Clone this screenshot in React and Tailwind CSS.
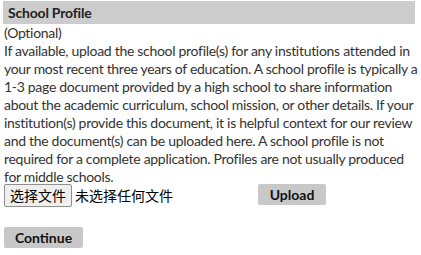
export default function App() {
  const lines = [
    "If available, upload the school profile(s) for any institutions attended in",
    "your most recent three years of education. A school profile is typically a",
    "1-3 page document provided by a high school to share information",
    "about the academic curriculum, school mission, or other details. If your",
    "institution(s) provide this document, it is helpful context for our review",
    "and the document(s) can be uploaded here. A school profile is not",
    "required for a complete application. Profiles are not usually produced",
    "for middle schools.",
  ];
  return (
    <div className="w-[421px] h-[255px] bg-white text-[#333] overflow-hidden" style={{ fontFamily: "Lato, 'Noto Sans CJK SC', sans-serif" }}>
      <div className="pt-[1px] px-[3px]">
        <div className="w-[412px] h-[23px] bg-[#cccccc] flex items-center pl-[5px] text-[14px] font-bold text-[#222] tracking-[-0.2px]">
          School Profile
        </div>
      </div>
      <div className="px-[4px] text-[14px] leading-[18px] tracking-[-0.3px]">
        <div>(Optional)</div>
        {lines.map((l, i) => (
          <div key={i} className="whitespace-nowrap">{l}</div>
        ))}
      </div>
      <div className="flex items-center px-[4px] mt-[-2px] h-[23px]">
        <div className="h-[23px] w-[68px] border border-[#8f8f8f] rounded-[2px] bg-[#efefef] flex items-center justify-center text-[14px] text-black" style={{ fontFamily: "'Noto Sans CJK SC', sans-serif" }}>
          选择文件
        </div>
        <span className="ml-[3px] text-[14px] text-black" style={{ fontFamily: "'Noto Sans CJK SC', sans-serif" }}>未选择任何文件</span>
        <div className="ml-auto mr-[91px] self-start h-[21px] w-[68px] bg-[#c8c8c8] rounded-[2px] flex items-center justify-center text-[14px] font-bold text-[#111]">
          Upload
        </div>
      </div>
      <div className="px-[4px] mt-[20px]">
        <div className="h-[21px] w-[79px] bg-[#c8c8c8] rounded-[2px] flex items-center justify-center text-[14px] font-bold text-[#111]">
          Continue
        </div>
      </div>
    </div>
  );
}
